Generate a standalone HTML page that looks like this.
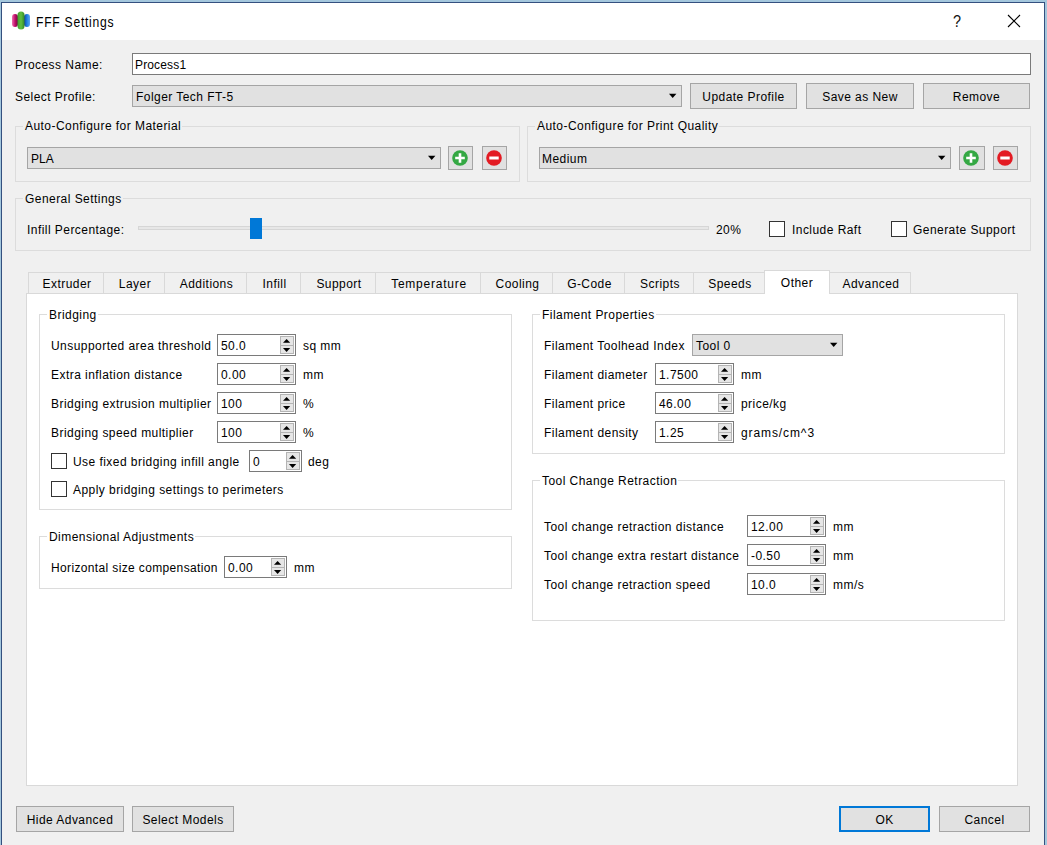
<!DOCTYPE html><html><head><meta charset="utf-8"><style>
*{margin:0;padding:0;box-sizing:border-box}
html,body{width:1047px;height:845px;overflow:hidden;background:#f0f0f0;position:relative;font-family:"Liberation Sans",sans-serif}
div{position:absolute}
.t{font-size:12px;line-height:14px;white-space:pre;color:#000;letter-spacing:.45px}
.c{text-align:center}
.gb{border:1px solid #dcdcdc}
.gt{background:#f0f0f0;padding:0 1px 0 2px}
.pane .gt{background:#fff}
.inp{background:#fff;border:1px solid #7a7a7a}
.cb{background:#e1e1e1;border:1px solid #a5a5a5}
.btn{background:#e1e1e1;border:1px solid #a5a5a5}
.sp{background:#fff;border:1px solid #7a7a7a}
.sb{background:#e6e6e6;border:1px solid #b4b4b4}
.up{width:0;height:0;border-left:3.5px solid transparent;border-right:3.5px solid transparent;border-bottom:4.5px solid #000}
.dn{width:0;height:0;border-left:3.5px solid transparent;border-right:3.5px solid transparent;border-top:4.5px solid #000}
.ck{background:#fff;border:1px solid #333}
.tab{background:#f0f0f0;border:1px solid #d9d9d9;border-bottom:none}
</style></head><body>

<div style="left:0;top:0;width:1047px;height:2px;background:#a4c7dd"></div>
<div style="left:0;top:0;width:1px;height:845px;background:#a4c7dd"></div>
<div style="left:1045px;top:0;width:2px;height:845px;background:#a4c7dd"></div>
<div style="left:1px;top:2px;width:1044px;height:1px;background:#34507f"></div>
<div style="left:1px;top:2px;width:1px;height:843px;background:#34507f"></div>
<div style="left:1044px;top:2px;width:1px;height:843px;background:#34507f"></div>
<div style="left:2px;top:3px;width:1042px;height:37px;background:#fff"></div>
<svg style="position:absolute;left:11px;top:10px" width="20" height="20" viewBox="0 0 20 20">
<defs>
<linearGradient id="gm" x1="0" x2="1"><stop offset="0" stop-color="#f070b0"/><stop offset=".5" stop-color="#c0106a"/><stop offset="1" stop-color="#700040"/></linearGradient>
<linearGradient id="gg" x1="0" x2="1"><stop offset="0" stop-color="#40a030"/><stop offset=".5" stop-color="#60c040"/><stop offset="1" stop-color="#308828"/></linearGradient>
<linearGradient id="gbl" x1="0" x2="1"><stop offset="0" stop-color="#1040a0"/><stop offset=".5" stop-color="#2080e0"/><stop offset="1" stop-color="#60a8f0"/></linearGradient>
</defs>
<rect x="1" y="4" width="6" height="13" rx="3" fill="url(#gm)"/>
<rect x="13" y="4" width="6" height="13" rx="3" fill="url(#gbl)"/>
<rect x="6.5" y="1.5" width="7" height="18" rx="3.5" fill="url(#gg)"/>
</svg>
<div class="t" style="left:36px;top:13px;font-size:15px;line-height:18px;letter-spacing:.9px;transform:scaleX(.81);transform-origin:0 0;color:#000">FFF Settings</div>
<div class="t" style="left:953px;top:13px;font-size:16px;line-height:18px;letter-spacing:0;transform:scaleX(.9);transform-origin:0 0;color:#111">?</div>
<svg style="position:absolute;left:1007px;top:14px" width="14" height="14" viewBox="0 0 14 14"><path d="M1 1L13 13M13 1L1 13" stroke="#000" stroke-width="1.1"/></svg>
<div class="t" style="left:15px;top:58px;">Process Name:</div>
<div class="inp" style="left:132px;top:53px;width:899px;height:22px;"></div>
<div class="t" style="left:135px;top:58px;letter-spacing:.15px">Process1</div>
<div class="t" style="left:15px;top:90px;">Select Profile:</div>
<div class="cb" style="left:132px;top:85px;width:550px;height:22px;"></div>
<div class="t" style="left:136px;top:90px;">Folger Tech FT-5</div>
<svg style="position:absolute;left:669px;top:93px" width="9" height="6"><polygon points="0,0.8 7.4,0.8 3.7,4.9" fill="#000"/></svg>
<div class="btn" style="left:690px;top:83px;width:107px;height:26px;"></div>
<div class="t c" style="left:690px;width:107px;top:90px;">Update Profile</div>
<div class="btn" style="left:806px;top:83px;width:108px;height:26px;"></div>
<div class="t c" style="left:806px;width:108px;top:90px;">Save as New</div>
<div class="btn" style="left:923px;top:83px;width:107px;height:26px;"></div>
<div class="t c" style="left:923px;width:107px;top:90px;">Remove</div>
<div class="gb" style="left:15px;top:126px;width:505px;height:56px;"></div>
<div class="t gt" style="left:23px;top:119px;">Auto-Configure for Material</div>
<div class="cb" style="left:27px;top:147px;width:414px;height:22px;"></div>
<div class="t" style="left:31px;top:152px;letter-spacing:0">PLA</div>
<svg style="position:absolute;left:428px;top:155px" width="9" height="6"><polygon points="0,0.8 7.4,0.8 3.7,4.9" fill="#000"/></svg>
<div class="btn" style="left:448px;top:146px;width:25px;height:24px;"></div>
<div class="btn" style="left:482px;top:146px;width:25px;height:24px;"></div>
<div class="gb" style="left:527px;top:126px;width:504px;height:56px;"></div>
<div class="t gt" style="left:535px;top:119px;">Auto-Configure for Print Quality</div>
<div class="cb" style="left:539px;top:147px;width:412px;height:22px;"></div>
<div class="t" style="left:542px;top:152px;">Medium</div>
<svg style="position:absolute;left:938px;top:155px" width="9" height="6"><polygon points="0,0.8 7.4,0.8 3.7,4.9" fill="#000"/></svg>
<div class="btn" style="left:959px;top:146px;width:26px;height:24px;"></div>
<div class="btn" style="left:993px;top:146px;width:25px;height:24px;"></div>
<svg style="position:absolute;left:452px;top:150px" width="16" height="16" viewBox="0 0 16 16"><circle cx="8" cy="8" r="7.8" fill="#34a843"/><path d="M3.2 8H12.8M8 3.2V12.8" stroke="#fff" stroke-width="2.6"/></svg>
<svg style="position:absolute;left:486px;top:150px" width="16" height="16" viewBox="0 0 16 16"><circle cx="8" cy="8" r="7.8" fill="#e31b23"/><path d="M3.3 8H12.7" stroke="#fff" stroke-width="3"/></svg>
<svg style="position:absolute;left:963px;top:150px" width="16" height="16" viewBox="0 0 16 16"><circle cx="8" cy="8" r="7.8" fill="#34a843"/><path d="M3.2 8H12.8M8 3.2V12.8" stroke="#fff" stroke-width="2.6"/></svg>
<svg style="position:absolute;left:997px;top:150px" width="16" height="16" viewBox="0 0 16 16"><circle cx="8" cy="8" r="7.8" fill="#e31b23"/><path d="M3.3 8H12.7" stroke="#fff" stroke-width="3"/></svg>
<div class="gb" style="left:15px;top:198px;width:1016px;height:53px;"></div>
<div class="t gt" style="left:23px;top:192px;">General Settings</div>
<div class="t" style="left:27px;top:223px;">Infill Percentage:</div>
<div style="left:138px;top:226px;width:571px;height:4px;background:#e7e7e7;border:1px solid #d6d6d6"></div>
<div style="left:250px;top:218px;width:12px;height:21px;background:#0078d7"></div>
<div class="t" style="left:716px;top:223px;">20%</div>
<div class="ck" style="left:769px;top:221px;width:16px;height:16px;"></div>
<div class="t" style="left:792px;top:223px;">Include Raft</div>
<div class="ck" style="left:891px;top:221px;width:16px;height:16px;"></div>
<div class="t" style="left:913px;top:223px;">Generate Support</div>
<div class="pane" style="left:26px;top:293px;width:992px;height:493px;background:#fff;border:1px solid #d9d9d9"></div>
<div class="tab" style="left:28px;top:272px;width:76px;height:21px;"></div>
<div class="t c" style="left:29px;width:76px;top:277px;">Extruder</div>
<div class="tab" style="left:103px;top:272px;width:62px;height:21px;"></div>
<div class="t c" style="left:104px;width:62px;top:277px;">Layer</div>
<div class="tab" style="left:164px;top:272px;width:83px;height:21px;"></div>
<div class="t c" style="left:165px;width:83px;top:277px;">Additions</div>
<div class="tab" style="left:246px;top:272px;width:55px;height:21px;"></div>
<div class="t c" style="left:247px;width:55px;top:277px;">Infill</div>
<div class="tab" style="left:300px;top:272px;width:76px;height:21px;"></div>
<div class="t c" style="left:301px;width:76px;top:277px;">Support</div>
<div class="tab" style="left:375px;top:272px;width:106px;height:21px;"></div>
<div class="t c" style="left:376px;width:106px;top:277px;letter-spacing:.75px">Temperature</div>
<div class="tab" style="left:480px;top:272px;width:73px;height:21px;"></div>
<div class="t c" style="left:481px;width:73px;top:277px;">Cooling</div>
<div class="tab" style="left:552px;top:272px;width:73px;height:21px;"></div>
<div class="t c" style="left:553px;width:73px;top:277px;">G-Code</div>
<div class="tab" style="left:624px;top:272px;width:70px;height:21px;"></div>
<div class="t c" style="left:625px;width:70px;top:277px;">Scripts</div>
<div class="tab" style="left:693px;top:272px;width:72px;height:21px;"></div>
<div class="t c" style="left:694px;width:72px;top:277px;">Speeds</div>
<div class="tab" style="left:829px;top:272px;width:82px;height:21px;"></div>
<div class="t c" style="left:830px;width:82px;top:277px;">Advanced</div>
<div style="left:764px;top:270px;width:66px;height:24px;background:#fff;border:1px solid #d9d9d9;border-bottom:none"></div>
<div class="t c" style="left:764px;width:66px;top:276px;">Other</div>
<div class="pane" style="left:0;top:0;width:1047px;height:845px">
<div class="gb" style="left:39px;top:314px;width:473px;height:196px;"></div>
<div class="t gt" style="left:47px;top:308px;">Bridging</div>
<div class="t" style="left:51px;top:339px;">Unsupported area threshold</div>
<div class="sp" style="left:217px;top:334px;width:79px;height:22px;"></div>
<div class="t" style="left:221px;top:339px;">50.0</div>
<div class="sb" style="left:280px;top:336px;width:14px;height:18px"></div>
<div style="left:280px;top:345px;width:14px;height:1px;background:#b4b4b4"></div>
<svg style="position:absolute;left:283px;top:338px" width="8" height="6"><polygon points="0,4.8 7.2,4.8 3.6,0.9" fill="#000"/></svg>
<svg style="position:absolute;left:283px;top:347px" width="8" height="6"><polygon points="0,1 7.2,1 3.6,4.9" fill="#000"/></svg>
<div class="t" style="left:303px;top:339px;">sq mm</div>
<div class="t" style="left:51px;top:368px;">Extra inflation distance</div>
<div class="sp" style="left:217px;top:363px;width:79px;height:22px;"></div>
<div class="t" style="left:221px;top:368px;">0.00</div>
<div class="sb" style="left:280px;top:365px;width:14px;height:18px"></div>
<div style="left:280px;top:374px;width:14px;height:1px;background:#b4b4b4"></div>
<svg style="position:absolute;left:283px;top:367px" width="8" height="6"><polygon points="0,4.8 7.2,4.8 3.6,0.9" fill="#000"/></svg>
<svg style="position:absolute;left:283px;top:376px" width="8" height="6"><polygon points="0,1 7.2,1 3.6,4.9" fill="#000"/></svg>
<div class="t" style="left:303px;top:368px;">mm</div>
<div class="t" style="left:51px;top:397px;">Bridging extrusion multiplier</div>
<div class="sp" style="left:217px;top:392px;width:79px;height:22px;"></div>
<div class="t" style="left:221px;top:397px;">100</div>
<div class="sb" style="left:280px;top:394px;width:14px;height:18px"></div>
<div style="left:280px;top:403px;width:14px;height:1px;background:#b4b4b4"></div>
<svg style="position:absolute;left:283px;top:396px" width="8" height="6"><polygon points="0,4.8 7.2,4.8 3.6,0.9" fill="#000"/></svg>
<svg style="position:absolute;left:283px;top:405px" width="8" height="6"><polygon points="0,1 7.2,1 3.6,4.9" fill="#000"/></svg>
<div class="t" style="left:303px;top:397px;">%</div>
<div class="t" style="left:51px;top:426px;">Bridging speed multiplier</div>
<div class="sp" style="left:217px;top:421px;width:79px;height:22px;"></div>
<div class="t" style="left:221px;top:426px;">100</div>
<div class="sb" style="left:280px;top:423px;width:14px;height:18px"></div>
<div style="left:280px;top:432px;width:14px;height:1px;background:#b4b4b4"></div>
<svg style="position:absolute;left:283px;top:425px" width="8" height="6"><polygon points="0,4.8 7.2,4.8 3.6,0.9" fill="#000"/></svg>
<svg style="position:absolute;left:283px;top:434px" width="8" height="6"><polygon points="0,1 7.2,1 3.6,4.9" fill="#000"/></svg>
<div class="t" style="left:303px;top:426px;">%</div>
<div class="ck" style="left:51px;top:453px;width:16px;height:16px;"></div>
<div class="t" style="left:73px;top:455px;">Use fixed bridging infill angle</div>
<div class="sp" style="left:249px;top:450px;width:53px;height:22px;"></div>
<div class="t" style="left:253px;top:455px;">0</div>
<div class="sb" style="left:286px;top:452px;width:14px;height:18px"></div>
<div style="left:286px;top:461px;width:14px;height:1px;background:#b4b4b4"></div>
<svg style="position:absolute;left:289px;top:454px" width="8" height="6"><polygon points="0,4.8 7.2,4.8 3.6,0.9" fill="#000"/></svg>
<svg style="position:absolute;left:289px;top:463px" width="8" height="6"><polygon points="0,1 7.2,1 3.6,4.9" fill="#000"/></svg>
<div class="t" style="left:308px;top:455px;">deg</div>
<div class="ck" style="left:51px;top:481px;width:16px;height:16px;"></div>
<div class="t" style="left:73px;top:483px;">Apply bridging settings to perimeters</div>
<div class="gb" style="left:39px;top:536px;width:473px;height:53px;"></div>
<div class="t gt" style="left:47px;top:530px;">Dimensional Adjustments</div>
<div class="t" style="left:51px;top:561px;letter-spacing:.36px">Horizontal size compensation</div>
<div class="sp" style="left:224px;top:556px;width:63px;height:22px;"></div>
<div class="t" style="left:228px;top:561px;">0.00</div>
<div class="sb" style="left:271px;top:558px;width:14px;height:18px"></div>
<div style="left:271px;top:567px;width:14px;height:1px;background:#b4b4b4"></div>
<svg style="position:absolute;left:274px;top:560px" width="8" height="6"><polygon points="0,4.8 7.2,4.8 3.6,0.9" fill="#000"/></svg>
<svg style="position:absolute;left:274px;top:569px" width="8" height="6"><polygon points="0,1 7.2,1 3.6,4.9" fill="#000"/></svg>
<div class="t" style="left:294px;top:561px;">mm</div>
<div class="gb" style="left:532px;top:314px;width:473px;height:140px;"></div>
<div class="t gt" style="left:540px;top:308px;">Filament Properties</div>
<div class="t" style="left:544px;top:339px;">Filament Toolhead Index</div>
<div class="cb" style="left:692px;top:334px;width:151px;height:22px;"></div>
<div class="t" style="left:696px;top:339px;">Tool 0</div>
<svg style="position:absolute;left:830px;top:342px" width="9" height="6"><polygon points="0,0.8 7.4,0.8 3.7,4.9" fill="#000"/></svg>
<div class="t" style="left:544px;top:368px;">Filament diameter</div>
<div class="sp" style="left:655px;top:363px;width:79px;height:22px;"></div>
<div class="t" style="left:659px;top:368px;">1.7500</div>
<div class="sb" style="left:718px;top:365px;width:14px;height:18px"></div>
<div style="left:718px;top:374px;width:14px;height:1px;background:#b4b4b4"></div>
<svg style="position:absolute;left:721px;top:367px" width="8" height="6"><polygon points="0,4.8 7.2,4.8 3.6,0.9" fill="#000"/></svg>
<svg style="position:absolute;left:721px;top:376px" width="8" height="6"><polygon points="0,1 7.2,1 3.6,4.9" fill="#000"/></svg>
<div class="t" style="left:741px;top:368px;">mm</div>
<div class="t" style="left:544px;top:397px;">Filament price</div>
<div class="sp" style="left:655px;top:392px;width:79px;height:22px;"></div>
<div class="t" style="left:659px;top:397px;">46.00</div>
<div class="sb" style="left:718px;top:394px;width:14px;height:18px"></div>
<div style="left:718px;top:403px;width:14px;height:1px;background:#b4b4b4"></div>
<svg style="position:absolute;left:721px;top:396px" width="8" height="6"><polygon points="0,4.8 7.2,4.8 3.6,0.9" fill="#000"/></svg>
<svg style="position:absolute;left:721px;top:405px" width="8" height="6"><polygon points="0,1 7.2,1 3.6,4.9" fill="#000"/></svg>
<div class="t" style="left:741px;top:397px;">price/kg</div>
<div class="t" style="left:544px;top:426px;">Filament density</div>
<div class="sp" style="left:655px;top:421px;width:79px;height:22px;"></div>
<div class="t" style="left:659px;top:426px;">1.25</div>
<div class="sb" style="left:718px;top:423px;width:14px;height:18px"></div>
<div style="left:718px;top:432px;width:14px;height:1px;background:#b4b4b4"></div>
<svg style="position:absolute;left:721px;top:425px" width="8" height="6"><polygon points="0,4.8 7.2,4.8 3.6,0.9" fill="#000"/></svg>
<svg style="position:absolute;left:721px;top:434px" width="8" height="6"><polygon points="0,1 7.2,1 3.6,4.9" fill="#000"/></svg>
<div class="t" style="left:741px;top:426px;letter-spacing:.9px">grams/cm^3</div>
<div class="gb" style="left:532px;top:480px;width:473px;height:141px;"></div>
<div class="t gt" style="left:540px;top:474px;">Tool Change Retraction</div>
<div class="t" style="left:544px;top:520px;">Tool change retraction distance</div>
<div class="sp" style="left:747px;top:515px;width:79px;height:22px;"></div>
<div class="t" style="left:751px;top:520px;">12.00</div>
<div class="sb" style="left:810px;top:517px;width:14px;height:18px"></div>
<div style="left:810px;top:526px;width:14px;height:1px;background:#b4b4b4"></div>
<svg style="position:absolute;left:813px;top:519px" width="8" height="6"><polygon points="0,4.8 7.2,4.8 3.6,0.9" fill="#000"/></svg>
<svg style="position:absolute;left:813px;top:528px" width="8" height="6"><polygon points="0,1 7.2,1 3.6,4.9" fill="#000"/></svg>
<div class="t" style="left:833px;top:520px;">mm</div>
<div class="t" style="left:544px;top:549px;">Tool change extra restart distance</div>
<div class="sp" style="left:747px;top:544px;width:79px;height:22px;"></div>
<div class="t" style="left:751px;top:549px;">-0.50</div>
<div class="sb" style="left:810px;top:546px;width:14px;height:18px"></div>
<div style="left:810px;top:555px;width:14px;height:1px;background:#b4b4b4"></div>
<svg style="position:absolute;left:813px;top:548px" width="8" height="6"><polygon points="0,4.8 7.2,4.8 3.6,0.9" fill="#000"/></svg>
<svg style="position:absolute;left:813px;top:557px" width="8" height="6"><polygon points="0,1 7.2,1 3.6,4.9" fill="#000"/></svg>
<div class="t" style="left:833px;top:549px;">mm</div>
<div class="t" style="left:544px;top:578px;">Tool change retraction speed</div>
<div class="sp" style="left:747px;top:573px;width:79px;height:22px;"></div>
<div class="t" style="left:751px;top:578px;">10.0</div>
<div class="sb" style="left:810px;top:575px;width:14px;height:18px"></div>
<div style="left:810px;top:584px;width:14px;height:1px;background:#b4b4b4"></div>
<svg style="position:absolute;left:813px;top:577px" width="8" height="6"><polygon points="0,4.8 7.2,4.8 3.6,0.9" fill="#000"/></svg>
<svg style="position:absolute;left:813px;top:586px" width="8" height="6"><polygon points="0,1 7.2,1 3.6,4.9" fill="#000"/></svg>
<div class="t" style="left:833px;top:578px;">mm/s</div>
</div>
<div class="btn" style="left:16px;top:806px;width:108px;height:26px;"></div>
<div class="t c" style="left:16px;width:108px;top:813px;">Hide Advanced</div>
<div class="btn" style="left:132px;top:806px;width:102px;height:26px;"></div>
<div class="t c" style="left:132px;width:102px;top:813px;">Select Models</div>
<div class="btn" style="left:839px;top:806px;width:91px;height:26px;border:2px solid #0078d7"></div>
<div class="t c" style="left:839px;width:91px;top:813px;">OK</div>
<div class="btn" style="left:939px;top:806px;width:91px;height:26px;"></div>
<div class="t c" style="left:939px;width:91px;top:813px;">Cancel</div>
</body></html>
